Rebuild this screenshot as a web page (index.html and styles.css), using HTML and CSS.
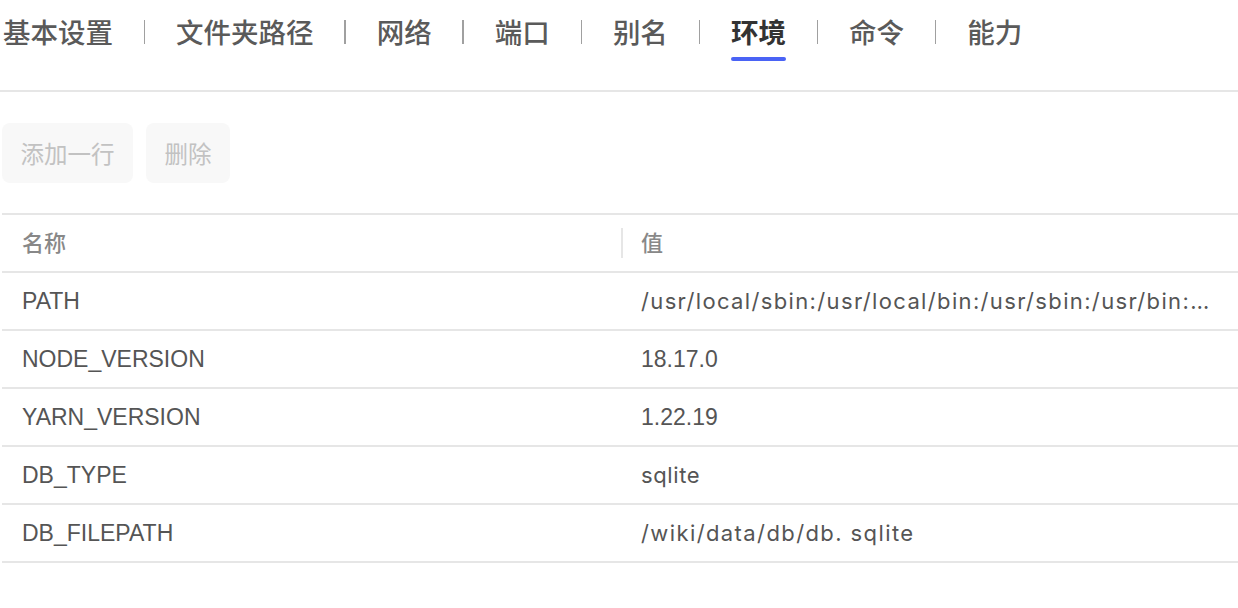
FILE: index.html
```html
<!DOCTYPE html>
<html lang="zh">
<head>
<meta charset="utf-8">
<title>环境</title>
<link rel="stylesheet" href="styles.css">
</head>
<body>
<nav class="tabs">
  <span class="tab">基本设置</span><span class="sep"></span>
  <span class="tab">文件夹路径</span><span class="sep"></span>
  <span class="tab">网络</span><span class="sep"></span>
  <span class="tab">端口</span><span class="sep"></span>
  <span class="tab">别名</span><span class="sep"></span>
  <span class="tab active">环境</span><span class="sep"></span>
  <span class="tab">命令</span><span class="sep"></span>
  <span class="tab">能力</span>
</nav>
<div class="toolbar">
  <button class="btn" disabled>添加一行</button>
  <button class="btn" disabled>删除</button>
</div>
<table class="env">
  <thead>
    <tr><th class="col-name">名称</th><th class="col-val"><span class="divider"></span>值</th></tr>
  </thead>
  <tbody>
    <tr><td>PATH</td><td><div class="ell path">/usr/local/sbin:/usr/local/bin:/usr/sbin:/usr/bin:/sbin:/bin</div></td></tr>
    <tr><td>NODE_VERSION</td><td>18.17.0</td></tr>
    <tr><td>YARN_VERSION</td><td>1.22.19</td></tr>
    <tr><td>DB_TYPE</td><td class="wide">sqlite</td></tr>
    <tr><td>DB_FILEPATH</td><td class="wide spaced">/wiki/data/db/db. sqlite</td></tr>
  </tbody>
</table>
</body>
</html>
```
FILE: styles.css
```css
html, body {
  margin: 0;
  padding: 0;
  background: #fff;
}
body {
  font-family: "Liberation Sans", "Noto Sans CJK SC", sans-serif;
  color: #555;
}
.tabs {
  display: flex;
  align-items: flex-start;
  gap: 30.8px;
  height: 90px;
  padding: 0 0 0 3px;
  border-bottom: 2px solid #e6e6e6;
  font-family: "Noto Sans CJK SC", sans-serif;
}
.tab {
  position: relative;
  margin-top: 11px;
  font-size: 27.5px;
  line-height: 40px;
  font-weight: 500;
  color: #5a5a5a;
  white-space: nowrap;
}
.tab.active {
  color: #333;
  font-weight: 600;
}
.tab.active::after {
  content: "";
  position: absolute;
  left: 0;
  right: 0;
  top: 46px;
  height: 4px;
  border-radius: 2px;
  background: #4a63f5;
}
.sep {
  width: 1.5px;
  height: 24px;
  margin-top: 20px;
  background: #a0a0a0;
}
.toolbar {
  display: flex;
  gap: 13px;
  padding: 31px 0 0 2px;
}
.btn {
  height: 60px;
  padding: 0 18.5px;
  border: none;
  border-radius: 8px;
  background: #f8f8f8;
  color: #c2c2c2;
  font-family: "Noto Sans CJK SC", sans-serif;
  font-size: 23.5px;
  cursor: not-allowed;
}
.env {
  margin: 30px 0 0 2px;
  width: 1236px;
  border-collapse: collapse;
  table-layout: fixed;
  border-top: 2px solid #e6e6e6;
}
.env th, .env td {
  height: 56px;
  padding: 0 20px;
  border-bottom: 2px solid #e6e6e6;
  text-align: left;
  font-size: 23px;
  white-space: nowrap;
  overflow: hidden;
}
.env th {
  font-family: "Noto Sans CJK SC", sans-serif;
  font-weight: 500;
  font-size: 22px;
  color: #888;
  padding-bottom: 5px;
  height: 51px;
}
.env .col-name {
  width: 579px;
}
.col-val {
  position: relative;
}
.divider {
  position: absolute;
  left: 0;
  top: 13px;
  width: 2px;
  height: 30px;
  background: #e6e6e6;
}
.env td {
  color: #555;
}
.ell {
  overflow: hidden;
  text-overflow: ellipsis;
  white-space: nowrap;
}
.path {
  font-family: "Inter", "Liberation Sans", sans-serif;
  font-size: 22px;
  letter-spacing: 1.35px;
}
.env td.wide {
  font-family: "Inter", "Liberation Sans", sans-serif;
  font-size: 22px;
  letter-spacing: 0.6px;
}
.env td.spaced {
  letter-spacing: 1.4px;
}
```
